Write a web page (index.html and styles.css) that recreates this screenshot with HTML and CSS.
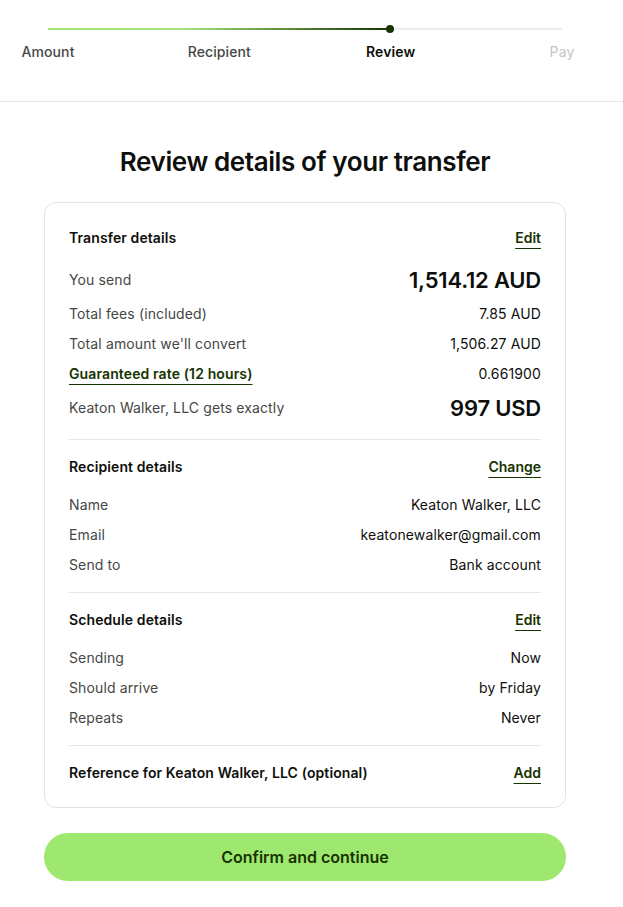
FILE: index.html
```html
<!DOCTYPE html>
<html lang="en">
<head>
<meta charset="utf-8">
<title>Review details of your transfer</title>
<link rel="stylesheet" href="styles.css">
</head>
<body>
<header class="stepper-bar">
  <div class="stepper">
    <div class="track">
      <div class="track-done"><span class="dot"></span></div>
    </div>
    <div class="steps">
      <div class="step done"><span>Amount</span></div>
      <div class="step done"><span>Recipient</span></div>
      <div class="step current"><span>Review</span></div>
      <div class="step todo"><span>Pay</span></div>
    </div>
  </div>
</header>
<main class="page">
  <h1 class="title">Review details of your transfer</h1>
  <section class="card">
    <div class="block first">
      <div class="block-head"><h2>Transfer details</h2><a class="link" href="#">Edit</a></div>
      <div class="row big"><span class="label">You send</span><span class="value">1,514.12 AUD</span></div>
      <div class="row"><span class="label">Total fees (included)</span><span class="value">7.85 AUD</span></div>
      <div class="row"><span class="label">Total amount we'll convert</span><span class="value">1,506.27 AUD</span></div>
      <div class="row"><a class="label rate" href="#">Guaranteed rate (12 hours)</a><span class="value">0.661900</span></div>
      <div class="row big"><span class="label">Keaton Walker, LLC gets exactly</span><span class="value">997 USD</span></div>
    </div>
    <div class="block">
      <div class="block-head"><h2>Recipient details</h2><a class="link" href="#">Change</a></div>
      <div class="row"><span class="label">Name</span><span class="value">Keaton Walker, LLC</span></div>
      <div class="row"><span class="label">Email</span><span class="value">keatonewalker@gmail.com</span></div>
      <div class="row"><span class="label">Send to</span><span class="value">Bank account</span></div>
    </div>
    <div class="block">
      <div class="block-head"><h2>Schedule details</h2><a class="link" href="#">Edit</a></div>
      <div class="row"><span class="label">Sending</span><span class="value">Now</span></div>
      <div class="row"><span class="label">Should arrive</span><span class="value">by Friday</span></div>
      <div class="row"><span class="label">Repeats</span><span class="value">Never</span></div>
    </div>
    <div class="block last">
      <div class="block-head"><h2>Reference for Keaton Walker, LLC (optional)</h2><a class="link" href="#">Add</a></div>
    </div>
  </section>
  <button class="confirm" type="button">Confirm and continue</button>
</main>
</body>
</html>
```
FILE: styles.css
```css
* { box-sizing: border-box; }
html, body { margin: 0; padding: 0; background: #ffffff; }
body {
  font-family: Inter, "Noto Sans", "Liberation Sans", sans-serif;
  color: #0e0f0c;
  font-size: 14px;
}

.stepper-bar {
  border-bottom: 1px solid #e6e6e6;
  padding: 28px 0 39px;
}
.stepper {
  margin-left: 48px;
  width: 514px;
}
.track {
  height: 2px;
  background: #ebebeb;
  border-radius: 1px;
}
.track-done {
  position: relative;
  width: 342px;
  height: 2px;
  border-radius: 1px;
  background: linear-gradient(to right, #9fe870 0%, #a3e27a 40%, #163300 100%);
}
.dot {
  position: absolute;
  right: -4px;
  top: -3px;
  width: 8px;
  height: 8px;
  border-radius: 50%;
  background: #163300;
}
.steps {
  display: flex;
  justify-content: space-between;
  margin-top: 12px;
}
.step {
  width: 0;
  display: flex;
  justify-content: center;
  white-space: nowrap;
  font-size: 14px;
  line-height: 20px;
  font-weight: 500;
  letter-spacing: 0.1px;
}
.step.done { color: #454745; }
.step.current { color: #0e0f0c; font-weight: 600; }
.step.todo { color: #c4c6c4; font-weight: 400; }

.page {
  margin-left: 44px;
  width: 522px;
  padding-bottom: 26px;
}
.title {
  margin: 44px 0 24px;
  text-align: center;
  font-size: 26px;
  line-height: 32px;
  font-weight: 600;
  letter-spacing: -0.4px;
  color: #0e0f0c;
}

.card {
  border: 1px solid #e3e3e3;
  border-radius: 12px;
  padding: 8px 24px 0;
}
.block {
  display: flex;
  flex-direction: column;
  gap: 10px;
  padding: 15px 0 17px;
  border-bottom: 1px solid #e6e6e6;
}
.block.last { border-bottom: none; padding-bottom: 22px; }
.block-head {
  display: flex;
  justify-content: space-between;
  align-items: center;
  height: 24px;
  margin-bottom: 6px;
}
.block.last .block-head { margin-bottom: 0; }
.block-head h2 {
  margin: 0;
  font-size: 14px;
  line-height: 24px;
  font-weight: 600;
  letter-spacing: 0.1px;
  color: #0e0f0c;
}
.link {
  font-size: 14px;
  line-height: 24px;
  font-weight: 600;
  color: #163300;
  text-decoration: underline;
  text-decoration-thickness: 1px;
  text-underline-offset: 5px;
}
.row {
  display: flex;
  justify-content: space-between;
  align-items: center;
  height: 20px;
  line-height: 20px;
  letter-spacing: 0.12px;
}
.row.big { height: 28px; }
.label { color: #454745; font-weight: 400; }
.value { color: #0e0f0c; font-weight: 400; }
.row.big .value {
  font-size: 22px;
  line-height: 28px;
  font-weight: 600;
  letter-spacing: -0.2px;
}
.label.rate {
  color: #163300;
  font-weight: 600;
  text-decoration: underline;
  text-decoration-thickness: 1px;
  text-underline-offset: 5px;
}

.confirm {
  display: block;
  width: 100%;
  height: 48px;
  margin-top: 25px;
  border: none;
  border-radius: 24px;
  background: #9fe870;
  color: #163300;
  font-family: Inter, "Noto Sans", "Liberation Sans", sans-serif;
  font-size: 16px;
  font-weight: 600;
}
```
